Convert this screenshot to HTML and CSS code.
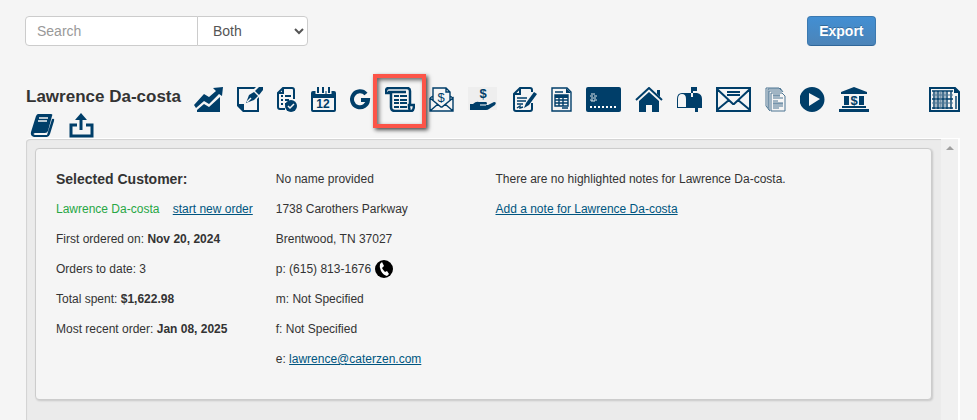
FILE: index.html
```html
<!DOCTYPE html>
<html lang="en">
<head>
    <meta charset="UTF-8">
    <meta name="viewport" content="width=device-width, initial-scale=1.0">
    <title>Lawrence Da-costa</title>
    <link rel="stylesheet" href="styles.css">
</head>
<body>
    <header class="top-bar">
        <form class="search-form">
            <input class="search-input" type="text" placeholder="Search" aria-label="Search">
            <select class="search-type" aria-label="Search type">
                <option>Both</option>
            </select>
        </form>
        <div class="export">
            <button class="btn" type="button">Export</button>
        </div>
    </header>

    <nav class="toolbar">
        <h1 class="customer-name">Lawrence Da-costa</h1>
        <a class="tool" href="#" aria-label="Sales">
            <svg width="29" height="25" viewBox="0 0 29 25">
                <path d="M0 18L10 7L15 10L22 4L19 1L29 0L28 9L25 7L15 17L10 14L2 21Z"/>
                <path d="M3 25V23L10 17L15 20L26 10V25Z"/>
            </svg>
        </a>
        <a class="tool" href="#" aria-label="Edit">
            <svg width="26" height="25" viewBox="0 0 26 25">
                <path d="M0 0H19L17 2H2V17H7V23H20V12L22 10V25H6L0 19Z"/>
                <path d="M9 16L12 8L17 5L21 9L17 13Z"/>
                <path d="M18 4L22 0H26V3L22 8Z"/>
                <path class="cut thin-cut" d="M10 15L14 11"/>
            </svg>
        </a>
        <a class="tool" href="#" aria-label="Tasks">
            <svg width="20" height="25" viewBox="0 0 20 25">
                <path class="line" d="M17 12V3Q17 1 15 1H6L1 6V20Q1 22 3 22H8M6 1V6H1"/>
                <path class="line" d="M4 9H6M4 13H6M4 17H6M8 9H14M8 13H12M8 17H9"/>
                <circle cx="14" cy="19" r="6"/>
                <path class="cut thin-cut" d="M11 19L13 21L17 17"/>
            </svg>
        </a>
        <a class="tool" href="#" aria-label="Calendar">
            <svg width="25" height="25" viewBox="0 0 25 25">
                <path fill-rule="evenodd" d="M2 4H23Q25 4 25 6V23Q25 25 23 25H2Q0 25 0 23V6Q0 4 2 4ZM2 11V23H23V11Z"/>
                <path class="gap-line" d="M7 0V7M12 0V7M18 0V7"/>
                <path class="line" d="M7 0V6M12 0V6M18 0V6"/>
                <text class="day" x="12" y="21">12</text>
            </svg>
        </a>
        <a class="tool" href="#" aria-label="Google">
            <svg width="21" height="25" viewBox="0 0 21 25">
                <path class="g-line" d="M16 7A8 8 0 1 0 18 13H11"/>
            </svg>
        </a>
        <a class="tool" href="#" aria-label="Order history">
            <svg width="30" height="25" viewBox="0 0 30 25">
                <path class="roll" d="M6 6H1V4Q1 1 4 1H22Q25 1 25 4V17M6 5V20Q6 24 10 24H26Q29 24 29 18H24V20Q24 22 25 23M3 5H21"/>
                <path class="rows" d="M9 9H14M15 9H22M9 13H14M15 13H22M9 16H14M15 16H22M9 20H14M15 20H22"/>
            </svg>
            <span class="highlight"></span>
        </a>
        <a class="tool" href="#" aria-label="Invoices">
            <svg width="25" height="25" viewBox="0 0 25 25">
                <path class="thin" d="M4 13V1H17L21 5V13M17 1V5H21M1 11V24H24V11L13 20H12L1 11M1 24L9 17M24 24L16 17M1 11L4 9M24 11L21 9"/>
                <text class="dollar" x="12" y="15">$</text>
            </svg>
        </a>
        <a class="tool" href="#" aria-label="Payments">
            <svg width="30" height="25" viewBox="0 0 30 25">
                <rect class="tile" x="0" y="0" width="29" height="23"/>
                <path d="M2 17H5Q8 14 11 15H18Q20 16 18 18H20L26 15Q29 15 27 18L21 22Q20 23 18 23H2Z"/>
                <path class="faint" d="M12 18H18"/>
                <text class="dollar strong" x="15" y="11">$</text>
            </svg>
        </a>
        <a class="tool" href="#" aria-label="Contracts">
            <svg width="25" height="25" viewBox="0 0 25 25">
                <path class="line" d="M20 5V3Q20 1 18 1H8L2 7V22Q2 24 4 24H18Q20 24 20 22V16M8 1V7H2"/>
                <path class="thin" d="M5 11H15M5 14H14M5 17H11M5 21L8 19L8 21L11 20"/>
                <path d="M12 21L14 16L22 5L25 7L17 18Z"/>
            </svg>
        </a>
        <a class="tool" href="#" aria-label="Statement">
            <svg width="21" height="25" viewBox="0 0 21 25">
                <path class="thin" d="M1 1H16L20 5V24H1ZM4 5H12M4 8H17V19H4ZM4 13H17M4 16H17M8 8V19M12 8V19M11 21H17"/>
                <path d="M15 1L20 6H15ZM4 8H17V11H4Z"/>
            </svg>
        </a>
        <a class="tool" href="#" aria-label="Credit card">
            <svg width="35" height="25" viewBox="0 0 35 25">
                <rect width="35" height="25" rx="2"/>
                <path class="chip" d="M5 7H9M4 9H7M8 9H11M5 11H10M4 13H7M8 13H11M5 14H9"/>
                <path class="dots" d="M4 20H32"/>
            </svg>
        </a>
        <a class="tool" href="#" aria-label="Home">
            <svg width="28" height="25" viewBox="0 0 28 25">
                <path d="M4 14L14 5L24 14V25H17V18H11V25H4Z"/>
                <path class="line" d="M1 13L14 1L27 13"/>
                <path d="M22 3H25V10L22 7Z"/>
            </svg>
        </a>
        <a class="tool" href="#" aria-label="Mailbox">
            <svg width="25" height="25" viewBox="0 0 25 25">
                <path fill-rule="evenodd" d="M0 12Q0 6 5 6H14V0H20V4H16V10H14V6H20Q25 7 25 12V21H21V25H18V21H0ZM1 20H9V12Q9 7 5 7Q1 7 1 12Z"/>
            </svg>
        </a>
        <a class="tool" href="#" aria-label="Email">
            <svg width="35" height="25" viewBox="0 0 35 25">
                <path class="line" d="M1 1H34V24H1ZM1 2L17 17H18L34 2M1 23L13 13M34 23L22 13M11 5H24M11 8H24"/>
            </svg>
        </a>
        <a class="tool" href="#" aria-label="Documents">
            <svg width="21" height="25" viewBox="0 0 21 25">
                <path class="page" d="M1 19V1H14L16 3M3 21V2H15M4 23V4H17M1 19L5 24M15 1L18 5M6 6H17L20 9V24H6Z"/>
                <path class="page" d="M8 8H15M8 9H15M8 11H18M8 14H13M8 16H18M8 17H18M8 19H18M8 21H14"/>
            </svg>
        </a>
        <a class="tool" href="#" aria-label="Play">
            <svg width="25" height="25" viewBox="0 0 25 25">
                <path fill-rule="evenodd" d="M12 0A12 12 0 0 1 12 25A12 12 0 0 1 12 0ZM9 6V19L20 12Z"/>
            </svg>
        </a>
        <a class="tool" href="#" aria-label="Bank">
            <svg width="30" height="25" viewBox="0 0 30 25">
                <path d="M15 0L28 5V7H2V5ZM5 9H10V18H5ZM20 9H25V18H20ZM3 19H27V21H3ZM0 22H30V25H0Z"/>
                <text class="dollar strong" x="15" y="18">$</text>
            </svg>
        </a>
        <span class="tool-space"></span>
        <a class="tool" href="#" aria-label="Report">
            <svg width="31" height="25" viewBox="0 0 31 25">
                <path class="line" d="M1 1H26L30 5V24H1Z"/>
                <path d="M25 0L31 6H25Z"/>
                <path class="thin" d="M3 4H24M3 12H24M3 21H24M5 4V22M9 4V22M14 4V22M18 4V22M22 4V22M27 9V22"/>
                <path class="page" d="M7 4V22M11 4V22M12 4V22M16 4V22M3 8H24M3 16H24"/>
            </svg>
        </a>
        <a class="tool" href="#" aria-label="Menu book">
            <svg width="29" height="25" viewBox="0 0 29 25">
                <path d="M12 1H25Q27 1 26 3L22 18Q21 20 19 20H9Q6 21 9 22H21L26 6Q29 5 28 8L24 21Q23 24 21 24H8Q4 23 5 19L10 3Q11 1 12 1Z"/>
                <path class="cut thin-cut" d="M13 5H22M12 8H21"/>
            </svg>
        </a>
        <a class="tool" href="#" aria-label="Share">
            <svg width="25" height="25" viewBox="0 0 25 25">
                <path class="thick" d="M8 12H2V23H23V12H17M12 17V4"/>
                <path d="M12 0L18 7H6Z"/>
            </svg>
        </a>
    </nav>

    <main class="panel">
        <section class="card">
            <div class="col">
                <h2>Selected Customer:</h2>
                <p><span class="active-name">Lawrence Da-costa</span> <a href="#">start new order</a></p>
                <p>First ordered on: <strong>Nov 20, 2024</strong></p>
                <p>Orders to date: 3</p>
                <p>Total spent: <strong>$1,622.98</strong></p>
                <p>Most recent order: <strong>Jan 08, 2025</strong></p>
            </div>
            <div class="col">
                <p>No name provided</p>
                <p>1738 Carothers Parkway</p>
                <p>Brentwood, TN 37027</p>
                <p class="phone">p: (615) 813-1676
                    <svg width="18" height="18" viewBox="0 0 18 18">
                        <circle cx="9" cy="9" r="9"/>
                        <path fill="#fff" d="M5 4L7 2L9 6L7 8Q8 10 10 12L12 11L14 14L12 16Q8 15 6 11Q4 7 5 4Z"/>
                    </svg>
                </p>
                <p>m: Not Specified</p>
                <p>f: Not Specified</p>
                <p>e: <a href="#">lawrence@caterzen.com</a></p>
            </div>
            <div class="col">
                <p>There are no highlighted notes for Lawrence Da-costa.</p>
                <p><a href="#">Add a note for Lawrence Da-costa</a></p>
            </div>
        </section>
        <div class="scrollbar"><span class="arrow-up"></span></div>
    </main>
</body>
</html>
```

FILE: styles.css
```css
* { box-sizing: border-box; }
body { display: flex; flex-direction: column; min-height: 100vh; margin: 0; background: #f5f5f5; color: #333; font-family: "Liberation Sans", Arial, sans-serif; font-size: 12px; }
h1, h2, p { margin: 0; }
a { color: #005580; }

.top-bar { display: flex; padding: 16px 25px 0; }
.search-form { display: flex; flex: 27; }
.export { flex: 5; }
.search-input, .search-type { height: 30px; border: 1px solid #ccc; background: #fff; color: #555; font-family: inherit; font-size: 14px; }
.search-input { width: 173px; padding: 4px 11px; border-radius: 4px 0 0 4px; }
.search-input::placeholder { color: #999; }
.search-type { width: 111px; margin-left: -1px; padding: 4px 0 4px 11px; border-radius: 0 4px 4px 0; }
.btn { height: 30px; padding: 0 11px; border: 1px solid #3b79b0; border-bottom-color: #2f6699; border-radius: 4px; background: linear-gradient(#428fd3, #4c84b8); color: #fff; font-family: inherit; font-size: 14px; font-weight: bold; text-shadow: 0 -1px 0 rgba(0, 0, 0, 0.25); cursor: pointer; }

.toolbar { display: flex; flex-wrap: wrap; align-items: flex-start; gap: 1px 9px; padding: 41px 8px 0 26px; }
.customer-name { min-width: 159px; font-size: 17px; line-height: 20px; }
.tool { position: relative; padding-right: 5px; }
.tool svg { display: block; fill: #003e69; }
.tool-space { width: 37px; }
.tool .line, .tool .thin, .tool .thick, .tool .roll, .tool .rows, .tool .g-line, .tool .page { fill: none; stroke: #003e69; stroke-width: 2; }
.tool .thin { stroke-width: 1.4; }
.tool .thick { stroke-width: 3; }
.tool .roll { stroke-width: 2.5; }
.tool .g-line { stroke-width: 4; }
.tool .page { stroke: #4c7592; stroke-width: 1; }
.tool .cut, .tool .gap-line { fill: none; stroke: #f5f5f5; stroke-width: 2; }
.tool .thin-cut { stroke-width: 1.5; }
.tool .gap-line { stroke-width: 5; }
.tool .chip { fill: none; stroke: #dce5eb; stroke-width: 1; }
.tool .dots { stroke: #fff; stroke-width: 2; stroke-dasharray: 2 2; }
.tool .tile { fill: #eee; }
.tool .faint { stroke: #fff; }
.day { font-size: 12px; font-weight: bold; text-anchor: middle; }
.dollar { font-size: 13px; text-anchor: middle; }
.strong { font-weight: bold; }
.highlight { position: absolute; top: -13px; left: -12px; width: 53px; height: 54px; border: 4px solid #fc5448; box-shadow: 2px 2px 4px rgba(0, 0, 0, 0.7), inset 2px 2px 4px rgba(0, 0, 0, 0.6); }

.panel { display: flex; flex: 1; margin: 0 17px 0 26px; border: solid #fff; border-width: 1px 2px 0 0; border-radius: 4px 0 0 0; background: #ebebeb; box-shadow: inset 1px 1px 1px #d2d2d2; }
.card { display: grid; grid-template-columns: 1fr 1fr 2fr; gap: 12px; flex: 1; align-self: flex-start; margin: 9px 9px 19px; padding: 15px 20px 25px; border: 1px solid #ccc; border-radius: 4px; background: #f5f5f5; box-shadow: 1px 1px 2px rgba(0, 0, 0, 0.15); }
.card p, .card h2 { line-height: 30px; white-space: nowrap; }
.card h2 { font-size: 14px; }
.active-name { margin-right: 10px; color: #28a745; }
.phone { display: flex; align-items: center; gap: 4px; }
.scrollbar { width: 17px; padding-top: 7px; background: #f0f0f0; }
.arrow-up { display: block; width: 8px; margin: 0 auto; border: solid transparent; border-width: 0 4px 4px; border-bottom-color: #a0a0a0; }
```
